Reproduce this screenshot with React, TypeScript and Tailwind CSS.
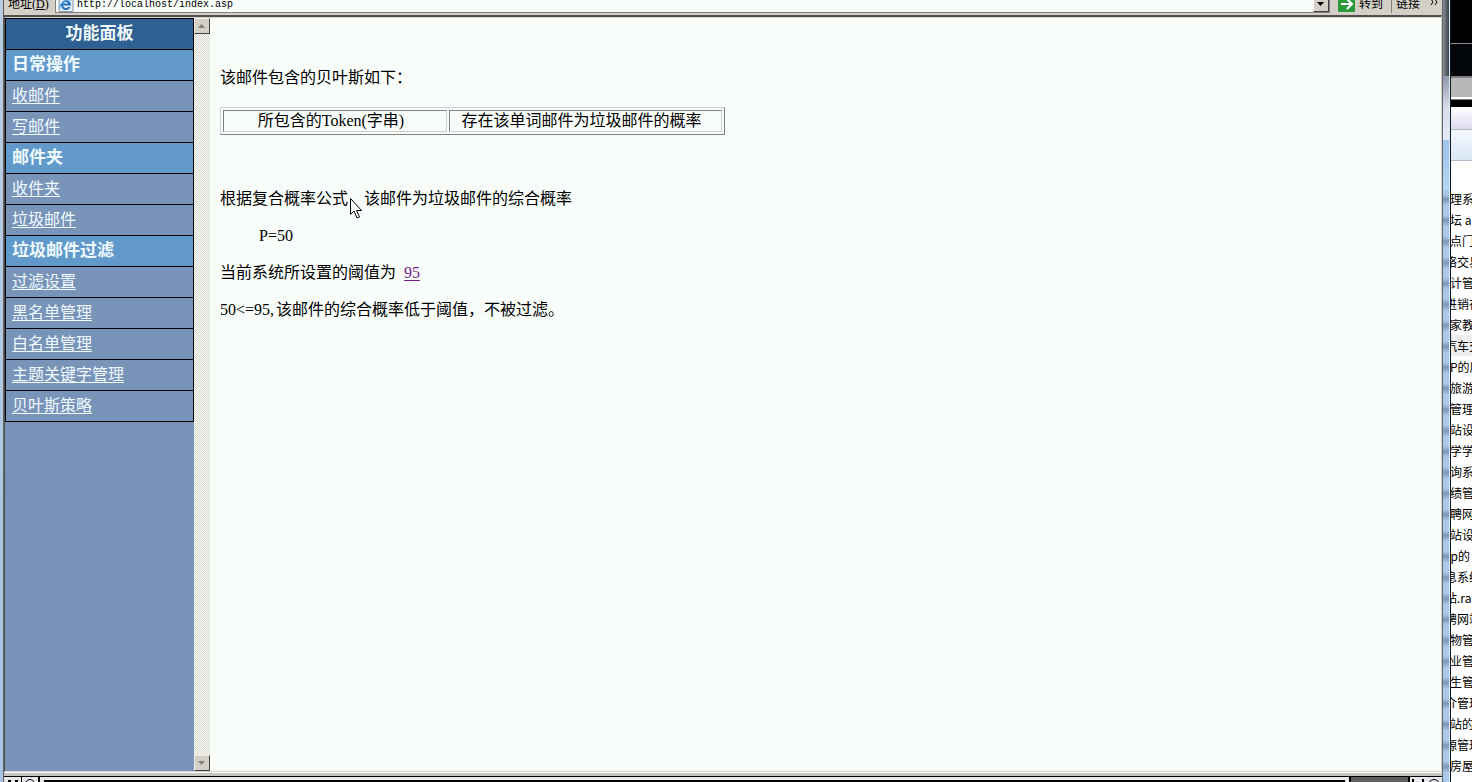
import React from 'react';

type NavItem = { label: string; heading?: boolean };

const navItems: NavItem[] = [
  { label: '日常操作', heading: true },
  { label: '收邮件' },
  { label: '写邮件' },
  { label: '邮件夹', heading: true },
  { label: '收件夹' },
  { label: '垃圾邮件' },
  { label: '垃圾邮件过滤', heading: true },
  { label: '过滤设置' },
  { label: '黑名单管理' },
  { label: '白名单管理' },
  { label: '主题关键字管理' },
  { label: '贝叶斯策略' },
];

// cut: the first character is half hidden behind the window edge
const files: { name: string; cut?: boolean }[] = [
  { name: '理系' },
  { name: '坛 a' },
  { name: '点门' },
  { name: '络交易', cut: true },
  { name: '计管' },
  { name: '进销存', cut: true },
  { name: '家教' },
  { name: '汽车交', cut: true },
  { name: 'P的房' },
  { name: '旅游' },
  { name: '管理' },
  { name: '站设' },
  { name: '学学' },
  { name: '询系' },
  { name: '绩管' },
  { name: '聘网' },
  { name: '站设' },
  { name: 'sp的', cut: true },
  { name: '息系统', cut: true },
  { name: '站.rar', cut: true },
  { name: '聘网站', cut: true },
  { name: '物管' },
  { name: '业管' },
  { name: '生管' },
  { name: '介管理', cut: true },
  { name: '站的' },
  { name: '源管理', cut: true },
  { name: '房屋' },
];

const AddressBar = () => (
  <div className="flex h-[13px] shrink-0 items-end overflow-hidden bg-[#d4d0c8] text-xs">
    <div className="flex h-[18px] w-full items-center">
      <label htmlFor="address" className="w-[51px] shrink-0 pl-1 whitespace-nowrap">
        地址(<span className="underline">D</span>)
      </label>
      <div className="flex h-[18px] flex-1 items-center border border-[#808080] bg-[#f8fdf9] pl-0.5">
        <svg width="16" height="16" viewBox="0 0 16 16" className="shrink-0">
          <path d="M1 0h11l3 3v12.500H1z" fill="#e6f0fa" stroke="#8b9aac" />
          <path d="M11.500 11A4 4 0 1 1 12 8.500H4.500" fill="none" stroke="#2470bd" strokeWidth="2" />
          <path d="M2 13C0 9 8 2 14 4" fill="none" stroke="#58a7de" strokeWidth="1.200" />
        </svg>
        <input
          id="address"
          type="text"
          defaultValue="http://localhost/index.asp"
          className="h-4 min-w-0 flex-1 bg-transparent pl-[3px] font-['Liberation_Mono',monospace] text-[10px] outline-none"
        />
        <button
          aria-label="展开"
          className="flex h-4 w-4 items-center justify-center border border-t-white border-r-[#404040] border-b-[#404040] border-l-white bg-[#d4d0c8]"
        >
          <svg width="7" height="4" viewBox="0 0 7 4">
            <path d="M0 0h7L3.500 4z" />
          </svg>
        </button>
      </div>
      <button className="flex h-5 items-center gap-1 pr-2 pl-2">
        <svg width="17" height="16" viewBox="0 0 17 16">
          <rect width="17" height="16" rx="1" fill="#2c9a3a" />
          <path d="M3 8h10M9 3l5 5-5 5" fill="none" stroke="#fff" strokeWidth="2" />
        </svg>
        转到
      </button>
      <button className="flex h-5 w-[51px] items-center justify-between border-l border-[#808080] pr-1 pl-1">
        链接
        <svg width="8" height="6" viewBox="0 0 8 6" className="mb-1">
          <path d="M1 0l2 3-2 3M5 0l2 3-2 3" fill="none" stroke="#000" />
        </svg>
      </button>
    </div>
  </div>
);

const ScrollButton = ({ up }: { up?: boolean }) => (
  <button
    aria-label={up ? '向上滚动' : '向下滚动'}
    className="flex h-4 w-4 items-center justify-center border border-t-[#f0eee8] border-r-[#404040] border-b-[#404040] border-l-[#f0eee8] bg-[#d4d0c8]"
  >
    <svg width="8" height="5" viewBox="0 0 8 5">
      <path d={up ? 'M0 4h7L3.500 0z' : 'M0 0h7L3.500 4z'} fill="#808080" />
    </svg>
  </button>
);

const Sidebar = () => (
  <div className="flex shrink-0">
    <nav className="w-[189px] bg-[#7994b9] text-[#f0fbff]">
      <ul className="border border-black">
        <li className="h-[30px] bg-[#2f6092] text-center text-[17px] leading-[30px] font-bold">功能面板</li>
        {navItems.map((item) =>
          item.heading ? (
            <li
              key={item.label}
              className="h-[31px] border-t border-black bg-[#6099ca] pl-1.5 text-[17px] leading-[29px] font-bold"
            >
              {item.label}
            </li>
          ) : (
            <li key={item.label} className="h-[31px] border-t border-black pl-1.5 leading-[29px]">
              <a href="#" className="underline underline-offset-2">
                {item.label}
              </a>
            </li>
          )
        )}
      </ul>
    </nav>
    <div className="flex w-4 flex-col justify-between bg-[repeating-conic-gradient(#fbfdf8_0_25%,#d6d6cc_0_50%)] bg-[length:2px_2px]">
      <ScrollButton up />
      <ScrollButton />
    </div>
  </div>
);

const Cursor = () => (
  <svg width="13" height="21" viewBox="0 0 13 21" className="absolute top-2 left-0.5">
    <path d="M.5.5v16l3.500-3.500 3 7 2.500-1-3-6.500h5z" fill="#fff" stroke="#000" />
  </svg>
);

const MailReport = () => (
  <main className="flex-1 bg-[#f8fdf9] px-2.5 pt-[49px] leading-[21px]">
    <p>该邮件包含的贝叶斯如下：</p>
    <table className="mt-[19px] w-[505px] border-separate border-spacing-[2px] border border-t-[#cdd1cd] border-r-[#808080] border-b-[#808080] border-l-[#cdd1cd] text-center leading-5">
      <tbody>
        <tr>
          <td className="w-[224px] border border-t-[#808080] border-r-[#cdd1cd] border-b-[#cdd1cd] border-l-[#808080] pr-2">
            所包含的Token(字串)
          </td>
          <td className="border border-t-[#808080] border-r-[#cdd1cd] border-b-[#cdd1cd] border-l-[#808080] pr-2">
            存在该单词邮件为垃圾邮件的概率
          </td>
        </tr>
      </tbody>
    </table>
    <p className="mt-[53px]">
      根据复合概率公式
      <span className="relative">
        ，
        <Cursor />
      </span>
      该邮件为垃圾邮件的综合概率
    </p>
    <p className="mt-4 pl-[39px]">P=50</p>
    <p className="mt-4">
      当前系统所设置的阈值为{' '}
      <a href="#" className="ml-1 text-[#7b1a8b] underline underline-offset-2">
        95
      </a>
    </p>
    <p className="mt-4">
      <span className="mr-0.5">50&lt;=95,</span>该邮件的综合概率低于阈值，不被过滤。
    </p>
  </main>
);

const PlayerBar = () => (
  <div className="flex h-1.5 shrink-0 overflow-hidden border-t border-black bg-[#e8e8ec]">
    <button aria-label="暂停" className="flex w-[18px] items-end justify-center gap-1 border-r border-black">
      <span className="h-0.5 w-[3px] bg-black" />
      <span className="h-0.5 w-[3px] bg-black" />
    </button>
    <button aria-label="停止" className="flex w-[18px] justify-center border-r-2 border-black pt-0.5">
      <span className="h-2.5 w-2.5 shrink-0 rounded-full border border-black" />
    </button>
    <div className="mt-[3px] mr-1 ml-1 flex-1 border-2 border-b-0 border-black bg-[#909090]" />
    <div className="w-[61px] border-x-2 border-black bg-[#606060]" />
    <button aria-label="音量" className="flex w-8 justify-center gap-1 pt-0.5">
      <span className="h-2 w-3 shrink-0 border-x-2 border-black" />
      <span className="h-3 w-3 shrink-0 rounded-full border border-black" />
    </button>
  </div>
);

const FileList = () => (
  <aside className="w-[22px] shrink-0 overflow-hidden border-l border-[#101820] bg-white font-['Noto_Sans_CJK_SC',sans-serif] text-xs">
    <div className="h-[43px] bg-black" />
    <div className="h-[33px] border-t border-[#909090] bg-[#03070c]" />
    <div className="h-[23px] border-y-2 border-t-[#808080] border-b-white bg-[#b8b8b8]" />
    <div className="h-2 border-t border-[#808080] bg-black" />
    <div className="h-[22px] bg-linear-to-b from-white to-[#dcdcf0]" />
    <div className="h-8 border-y border-[#b4bccb] bg-linear-to-b from-[#f3f9ff] to-[#dbe7f5]" />
    <ul className="pt-[27px]">
      {files.map((file, i) => (
        <li
          key={i}
          className={i === 7 ? 'h-[21px] bg-[#eeeeee] leading-[21px] whitespace-nowrap' : 'h-[21px] leading-[21px] whitespace-nowrap'}
        >
          <span className={file.cut ? '-ml-1.5' : '-ml-px'}>{file.name}</span>
        </li>
      ))}
    </ul>
  </aside>
);

export default function App() {
  return (
    <div className="flex h-screen overflow-hidden bg-[#d4d0c8] font-['Liberation_Serif','Noto_Sans_CJK_SC',serif] text-base text-black">
      <div className="w-[3px] shrink-0 bg-linear-to-b from-[#b8cde2] to-[#a8c4e4]" />
      <div className="flex min-w-0 flex-1 flex-col border-l border-[#606060]">
        <AddressBar />
        <div className="mt-0.5 flex min-h-0 flex-1 border-t-2 border-r border-b border-l border-t-[#505050] border-r-[#d4d0c8] border-b-[#d4d0c8] border-l-[#505050] pt-px">
          <Sidebar />
          <MailReport />
        </div>
        <div className="h-1 shrink-0 border-t border-white bg-[#c4c4c0]" />
        <PlayerBar />
      </div>
      <div className="flex w-2 shrink-0 flex-col border-x border-l-[#606870] border-r-[#d8e8f8]">
        <div className="h-[76px] bg-linear-to-r from-[#8a8f96] to-[#3c4148]" />
        <div className="h-[64px] bg-linear-to-b from-[#9098ac] via-[#d8dcea] to-[#e4ebf5]" />
        <div className="h-[50px] bg-linear-to-b from-[#9dc3ea] to-[#b4d4f4]" />
        <div className="flex-1 bg-[linear-gradient(#a9c8ea_20%,#7f97b4_45%,#a9c8ea_75%)] bg-[length:100%_21px]" />
      </div>
      <FileList />
    </div>
  );
}
